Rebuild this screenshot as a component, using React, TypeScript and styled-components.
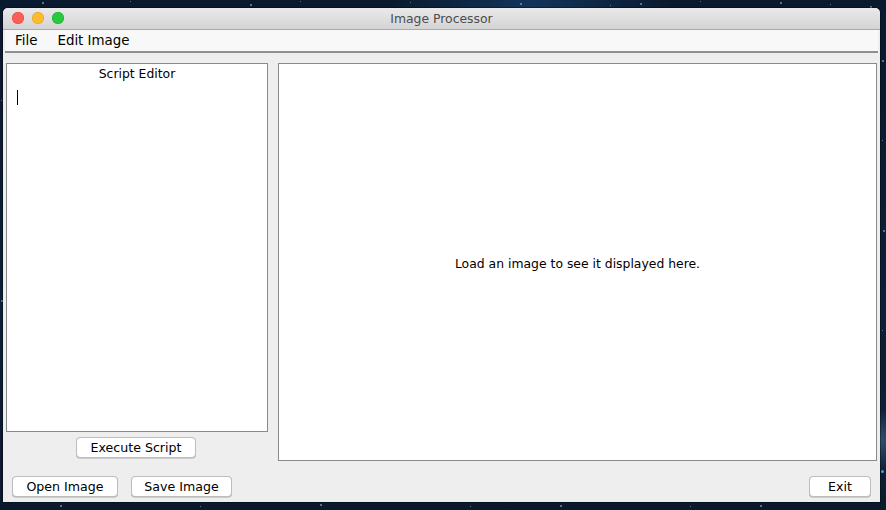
import React from "react";
import styled, { createGlobalStyle } from "styled-components";

const Global = createGlobalStyle`
  html, body { margin: 0; padding: 0; }
  body {
    width: 886px; height: 510px; overflow: hidden;
    font-family: "DejaVu Sans", "Liberation Sans", sans-serif;
  }
`;

const Desktop = styled.div`
  position: relative;
  width: 886px;
  height: 510px;
  box-sizing: border-box;
  padding: 8px 6px 0 3px;
  background:
    radial-gradient(circle at 880px 440px, rgba(120,180,230,0.35) 0, rgba(40,80,130,0.1) 30px, transparent 60px),
    radial-gradient(circle at 60% 0%, #12345a 0, transparent 140px),
    linear-gradient(180deg, #0a1a2e 0%, #0c1f36 60%, #0a1a2c 100%);
`;

const Star = styled.span<{ $x: number; $y: number; $s: number }>`
  position: absolute;
  left: ${(p) => p.$x}px;
  top: ${(p) => p.$y}px;
  width: ${(p) => p.$s}px;
  height: ${(p) => p.$s}px;
  border-radius: 50%;
  background: #6fb4e8;
  opacity: 0.8;
`;

const Window = styled.div`
  position: relative;
  width: 877px;
  height: 494px;
  display: flex;
  flex-direction: column;
  background: #eeeeee;
  border-radius: 5px 5px 0 0;
  overflow: hidden;
  box-shadow: 0 0 0 1px rgba(0,0,0,0.35);
`;

const TitleBar = styled.div`
  position: relative;
  height: 21px;
  flex: none;
  display: flex;
  align-items: center;
  justify-content: center;
  background: linear-gradient(180deg, #e9e9e9 0%, #d4d4d4 100%);
  border-bottom: 1px solid #a9a9a9;
`;

const Lights = styled.div`
  position: absolute;
  left: 9px;
  top: 4px;
  display: flex;
  gap: 8px;
`;

const Light = styled.span<{ $c: string; $b: string }>`
  width: 12px;
  height: 12px;
  border-radius: 50%;
  background: ${(p) => p.$c};
  box-shadow: inset 0 0 0 0.5px ${(p) => p.$b};
`;

const Title = styled.span`
  font-size: 12.4px;
  color: #4c4c4c;
`;

const MenuBar = styled.div`
  height: 21px;
  flex: none;
  display: flex;
  align-items: center;
  gap: 20px;
  padding-left: 10px;
  background: #f8f8f8;
  border-bottom: 2px solid #8f8f8f;
  margin: 0 2px;
`;

const MenuItem = styled.span`
  font-size: 13.4px;
  color: #000;
`;

const Body = styled.div`
  flex: 1;
  display: flex;
  flex-direction: column;
  padding: 10px 3px 6px 3px;
  gap: 14px;
`;

const Main = styled.div`
  flex: 1;
  display: flex;
  gap: 10px;
`;

const LeftColumn = styled.div`
  width: 262px;
  display: flex;
  flex-direction: column;
  align-items: center;
  gap: 5px;
`;

const EditorPanel = styled.div`
  width: 100%;
  height: 369px;
  box-sizing: border-box;
  background: #fff;
  border: 1px solid #8a8a8a;
  display: flex;
  flex-direction: column;
`;

const PanelTitle = styled.div`
  text-align: center;
  font-size: 12.4px;
  color: #000;
  padding-top: 2px;
  height: 18px;
`;

const Caret = styled.span`
  margin: 6px 0 0 10px;
  width: 1px;
  height: 15px;
  background: #000;
`;

const ImagePanel = styled.div`
  width: 599px;
  height: 398px;
  box-sizing: border-box;
  background: #fff;
  border: 1px solid #8a8a8a;
  display: flex;
  align-items: center;
  justify-content: center;
  padding-top: 3px;
  font-size: 12.4px;
  color: #000;
`;

const BottomRow = styled.div`
  display: flex;
  align-items: center;
  gap: 13px;
  padding: 1px 6px 0 6px;
`;

const Button = styled.button<{ $w: number }>`
  width: ${(p) => p.$w}px;
  height: 21px;
  padding: 0;
  box-sizing: border-box;
  background: #fff;
  border: 1px solid #bdbdbd;
  border-radius: 4px;
  box-shadow: 0 0.5px 0 #a8a8a8;
  font-family: inherit;
  font-size: 12.6px;
  color: #000;
`;

const ExecuteButton = styled(Button)`
  margin-right: 2px;
`;

const Spacer = styled.div`
  flex: 1;
`;

const stars = [
  [42, 2, 2], [130, 1, 1], [250, 4, 2], [300, 1, 1], [410, 2, 1], [520, 3, 2], [610, 5, 1],
  [640, 3, 2], [700, 1, 1], [780, 2, 2], [830, 4, 1], [870, 6, 2], [882, 60, 2], [882, 140, 1],
  [883, 230, 2], [882, 330, 1], [881, 470, 3], [60, 505, 2], [200, 506, 1], [320, 504, 2],
  [470, 506, 1], [560, 505, 2], [690, 506, 1], [760, 505, 2], [1, 100, 1], [1, 300, 2],
];

export default function App() {
  return (
    <>
      <Global />
      <Desktop>
        {stars.map(([x, y, s], i) => (
          <Star key={i} $x={x} $y={y} $s={s} />
        ))}
        <Window>
          <TitleBar>
            <Lights>
              <Light $c="#fc5f57" $b="#de4640" />
              <Light $c="#fdbc2e" $b="#dea123" />
              <Light $c="#28c840" $b="#1aab29" />
            </Lights>
            <Title>Image Processor</Title>
          </TitleBar>
          <MenuBar>
            <MenuItem>File</MenuItem>
            <MenuItem>Edit Image</MenuItem>
          </MenuBar>
          <Body>
            <Main>
              <LeftColumn>
                <EditorPanel>
                  <PanelTitle>Script Editor</PanelTitle>
                  <Caret />
                </EditorPanel>
                <ExecuteButton $w={120}>Execute Script</ExecuteButton>
              </LeftColumn>
              <ImagePanel>Load an image to see it displayed here.</ImagePanel>
            </Main>
            <BottomRow>
              <Button $w={106}>Open Image</Button>
              <Button $w={101}>Save Image</Button>
              <Spacer />
              <Button $w={62}>Exit</Button>
            </BottomRow>
          </Body>
        </Window>
      </Desktop>
    </>
  );
}
